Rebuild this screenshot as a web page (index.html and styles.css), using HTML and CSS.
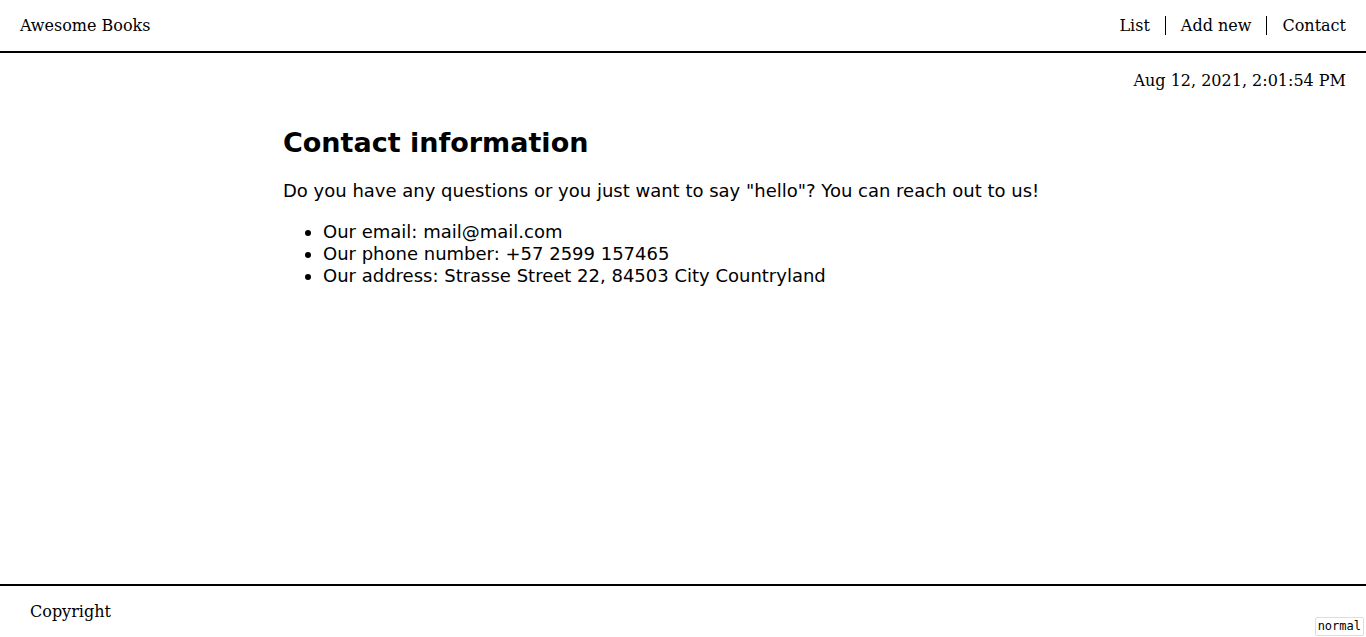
FILE: index.html
```html
<!DOCTYPE html>
<html lang="en">
<head>
<meta charset="utf-8">
<title>Awesome Books</title>
<link rel="stylesheet" href="styles.css">
</head>
<body>
<header class="topbar">
  <a class="brand" href="#">Awesome Books</a>
  <nav class="nav">
    <a class="nav-link" href="#">List</a>
    <a class="nav-link" href="#">Add new</a>
    <a class="nav-link" href="#">Contact</a>
  </nav>
</header>
<main class="main">
  <div class="date">Aug 12, 2021, 2:01:54 PM</div>
  <section class="contact">
    <h1 class="title">Contact information</h1>
    <p class="lead">Do you have any questions or you just want to say "hello"? You can reach out to us!</p>
    <ul class="info">
      <li>Our email: mail@mail.com</li>
      <li>Our phone number: +57 2599 157465</li>
      <li>Our address: Strasse Street 22, 84503 City Countryland</li>
    </ul>
  </section>
</main>
<footer class="footer">Copyright</footer>
<div class="badge">normal</div>
</body>
</html>
```
FILE: styles.css
```css
html, body {
  margin: 0;
  padding: 0;
}
body {
  font-family: "DejaVu Serif", serif;
  font-size: 16px;
  color: #000;
  background: #fff;
  min-height: 100vh;
  display: flex;
  flex-direction: column;
}
a {
  color: inherit;
  text-decoration: none;
}
.topbar {
  display: flex;
  justify-content: space-between;
  align-items: center;
  height: 51px;
  padding: 0 20px;
  border-bottom: 2px solid #000;
}
.nav {
  display: flex;
}
.nav-link {
  padding: 0 15px;
  border-left: 1px solid #000;
}
.nav-link:first-child {
  border-left: none;
}
.nav-link:last-child {
  padding-right: 0;
}
.main {
  flex: 1;
}
.date {
  text-align: right;
  padding: 18px 20px 0;
}
.contact {
  max-width: 800px;
  margin: 0 auto;
  padding-top: 18px;
  font-family: "DejaVu Sans", sans-serif;
  font-size: 18px;
}
.title {
  font-size: 27px;
  margin: 19px 0 22px;
}
.lead {
  margin: 0 0 20px;
}
.info {
  margin: 0;
  padding-left: 40px;
  line-height: 22px;
}
.footer {
  border-top: 2px solid #000;
  height: 51px;
  display: flex;
  align-items: center;
  padding-left: 30px;
}
.badge {
  position: fixed;
  right: 2px;
  bottom: 1px;
  font-family: "DejaVu Sans Mono", monospace;
  font-size: 12px;
  line-height: 15px;
  padding: 1px 2px;
  border: 1px solid #ddd;
  border-radius: 2px;
  background: #fff;
}
```
